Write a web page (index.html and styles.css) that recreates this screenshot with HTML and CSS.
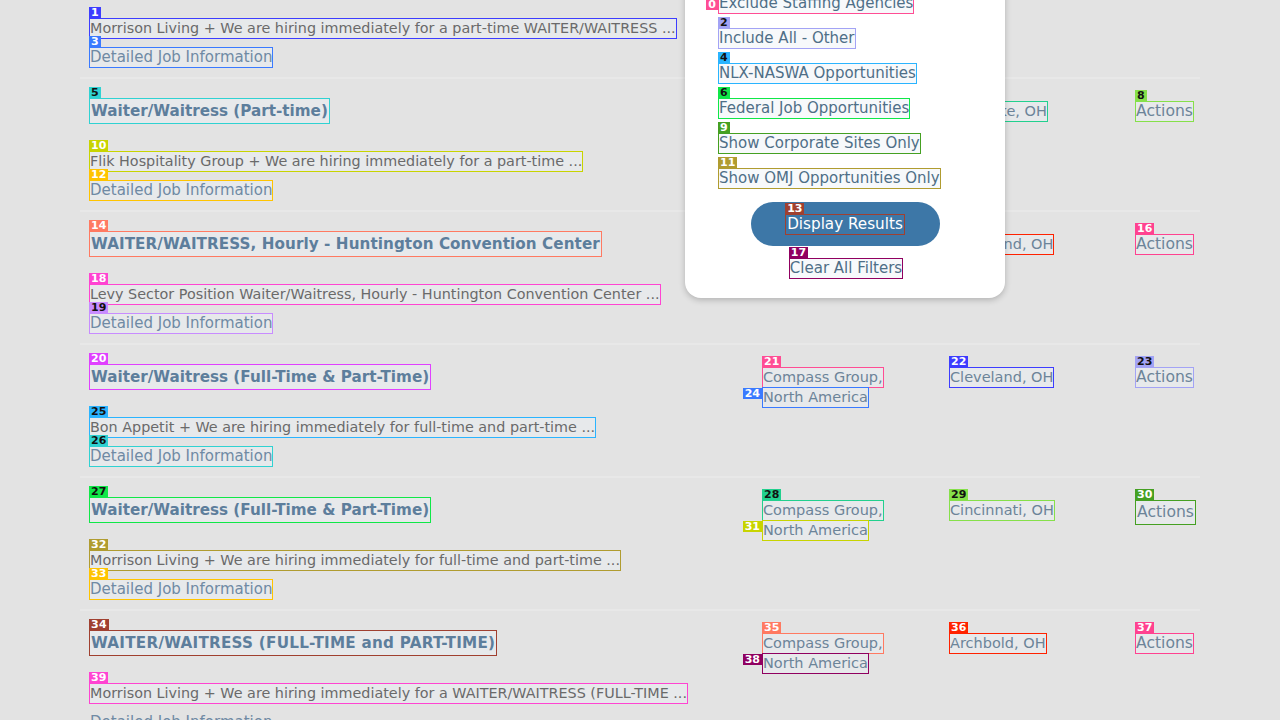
FILE: index.html
```html
<!DOCTYPE html>
<html lang="en">
<head>
<meta charset="utf-8">
<title>Job results</title>
<link rel="stylesheet" href="styles.css">
</head>
<body>
<div class="page">
  <div class="results">
    <div class="row">
      <div class="main">
        <div class="title"><span>Waiter/Waitress (Part-time)</span></div>
        <div class="desc"><span class="hl k1">Morrison Living + We are hiring immediately for a part-time WAITER/WAITRESS ...<b class="tag">1</b></span></div>
        <div class="link"><span class="hl k3">Detailed Job Information<b class="tag">3</b></span></div>
      </div>
      <div class="cell company"><span>Compass Group,</span><span>North America</span></div>
      <div class="cell"><span>Cleveland, OH</span></div>
      <div class="cell"><span class="actions">Actions</span></div>
    </div>

    <div class="row">
      <div class="main">
        <div class="title"><span class="hl k5">Waiter/Waitress (Part-time)<b class="tag dk">5</b></span></div>
        <div class="desc"><span class="hl k10">Flik Hospitality Group + We are hiring immediately for a part-time ...<b class="tag">10</b></span></div>
        <div class="link"><span class="hl k12">Detailed Job Information<b class="tag">12</b></span></div>
      </div>
      <div class="cell company"><span>Compass Group,</span><span>North America</span></div>
      <div class="cell"><span class="hl k7">Westlake, OH<b class="tag dk">7</b></span></div>
      <div class="cell"><span class="hl k8 actions">Actions<b class="tag dk">8</b></span></div>
    </div>

    <div class="row">
      <div class="main">
        <div class="title"><span class="hl k14 wide1">WAITER/WAITRESS, Hourly - Huntington Convention Center<b class="tag">14</b></span></div>
        <div class="desc"><span class="hl k18">Levy Sector Position Waiter/Waitress, Hourly - Huntington Convention Center ...<b class="tag">18</b></span></div>
        <div class="link"><span class="hl k19">Detailed Job Information<b class="tag dk">19</b></span></div>
      </div>
      <div class="cell company"><span>Levy Restaurants</span></div>
      <div class="cell"><span class="hl k15">Cleveland, OH<b class="tag">15</b></span></div>
      <div class="cell"><span class="hl k16 actions">Actions<b class="tag">16</b></span></div>
    </div>

    <div class="row">
      <div class="main">
        <div class="title"><span class="hl k20">Waiter/Waitress (Full-Time &amp; Part-Time)<b class="tag">20</b></span></div>
        <div class="desc"><span class="hl k4">Bon Appetit + We are hiring immediately for full-time and part-time ...<b class="tag dk">25</b></span></div>
        <div class="link"><span class="hl k5">Detailed Job Information<b class="tag dk">26</b></span></div>
      </div>
      <div class="cell company"><span class="hl k0">Compass Group,<b class="tag">21</b></span><span class="hl k3">North America<b class="tag side">24</b></span></div>
      <div class="cell"><span class="hl k1">Cleveland, OH<b class="tag">22</b></span></div>
      <div class="cell"><span class="hl k2 actions">Actions<b class="tag dk">23</b></span></div>
    </div>

    <div class="row">
      <div class="main">
        <div class="title"><span class="hl k6">Waiter/Waitress (Full-Time &amp; Part-Time)<b class="tag dk">27</b></span></div>
        <div class="desc"><span class="hl k11">Morrison Living + We are hiring immediately for full-time and part-time ...<b class="tag">32</b></span></div>
        <div class="link"><span class="hl k12">Detailed Job Information<b class="tag">33</b></span></div>
      </div>
      <div class="cell company"><span class="hl k7">Compass Group,<b class="tag dk">28</b></span><span class="hl k10">North America<b class="tag side">31</b></span></div>
      <div class="cell"><span class="hl k8">Cincinnati, OH<b class="tag dk">29</b></span></div>
      <div class="cell"><span class="hl k9 actions act">Actions<b class="tag">30</b></span></div>
    </div>

    <div class="row">
      <div class="main">
        <div class="title"><span class="hl k13 wide2">WAITER/WAITRESS (FULL-TIME and PART-TIME)<b class="tag">34</b></span></div>
        <div class="desc"><span class="hl k18">Morrison Living + We are hiring immediately for a WAITER/WAITRESS (FULL-TIME ...<b class="tag">39</b></span></div>
        <div class="link"><span>Detailed Job Information</span></div>
      </div>
      <div class="cell company"><span class="hl k14">Compass Group,<b class="tag">35</b></span><span class="hl k17">North America<b class="tag side">38</b></span></div>
      <div class="cell"><span class="hl k15">Archbold, OH<b class="tag">36</b></span></div>
      <div class="cell"><span class="hl k16 actions">Actions<b class="tag">37</b></span></div>
    </div>
  </div>

  <div class="panel">
    <div class="options">
      <label class="opt"><span class="hl k0">Exclude Staffing Agencies<b class="tag side top0">0</b></span></label>
      <label class="opt"><span class="hl k2">Include All - Other<b class="tag dk">2</b></span></label>
      <label class="opt"><span class="hl k4">NLX-NASWA Opportunities<b class="tag dk">4</b></span></label>
      <label class="opt"><span class="hl k6">Federal Job Opportunities<b class="tag dk">6</b></span></label>
      <label class="opt"><span class="hl k9">Show Corporate Sites Only<b class="tag">9</b></span></label>
      <label class="opt"><span class="hl k11">Show OMJ Opportunities Only<b class="tag">11</b></span></label>
    </div>
    <button class="display"><span class="hl k13">Display Results<b class="tag">13</b></span></button>
    <a class="clear"><span class="hl k17">Clear All Filters<b class="tag">17</b></span></a>
  </div>
</div>
</body>
</html>
```

FILE: styles.css
```css
* { box-sizing: border-box; }
html, body { margin: 0; padding: 0; }
body {
  background: #e3e3e3;
  font-family: "DejaVu Sans", "Noto Sans", sans-serif;
  width: 1280px;
  height: 720px;
  overflow: hidden;
}
.page { position: relative; width: 1280px; height: 720px; overflow: hidden; }

.results {
  margin: -54px 0 0 80px;
  width: 1120px;
}
.row {
  height: 133px;
  display: grid;
  grid-template-columns: 673px 187px 186px 1fr;
  padding-left: 10px;
  border-bottom: 2px solid #e8e8e8;
}
.main { display: flex; flex-direction: column; align-items: flex-start; padding-top: 20px; }
.title { font-weight: bold; font-size: 15.2px; line-height: 24px; color: #5d7e9c; height: 24px; white-space: nowrap; }
.title .hl { padding: 0 1px; }
.wide1 { letter-spacing: 0.07px; }
.wide2 { letter-spacing: 0.25px; }
.desc { margin-top: 29px; font-size: 14.35px; line-height: 19px; color: #6a6a6a; height: 19px; white-space: nowrap; }
.link { margin-top: 10px; font-size: 15px; line-height: 19px; color: #6f8aa4; white-space: nowrap; }

.cell {
  padding-top: 23px;
  font-size: 14.5px;
  line-height: 19px;
  color: #6c8499;
  display: flex;
  flex-direction: column;
  align-items: flex-start;
  white-space: nowrap;
}
.company { gap: 1px; }
.actions { font-size: 15.6px; }

.hl {
  position: relative;
  display: inline-block;
  outline: 1px solid var(--c);
  background: rgba(236, 240, 244, 0.45);
}
.act { padding: 2px 1px; }
.tag {
  position: absolute;
  left: -1px;
  bottom: 100%;
  background: var(--c);
  color: #fff;
  font: bold 11px/11px "DejaVu Sans", sans-serif;
  padding: 0 2px;
  margin-bottom: 1px;
  white-space: nowrap;
}
.tag.dk { color: #111; }
.tag.side { left: auto; right: 100%; bottom: auto; top: 0; margin: 0 1px 0 0; }
.tag.top0 { top: 5px; }

.k0 { --c: #ff4d94; }
.k1 { --c: #3d3dff; }
.k2 { --c: #a3a3f5; }
.k3 { --c: #3a7aff; }
.k4 { --c: #2ab4ff; }
.k5 { --c: #30d2d2; }
.k6 { --c: #10e848; }
.k7 { --c: #22d08e; }
.k8 { --c: #86e04a; }
.k9 { --c: #45a022; }
.k10 { --c: #c8d400; }
.k11 { --c: #b09c30; }
.k12 { --c: #ffc400; }
.k13 { --c: #a04030; }
.k14 { --c: #ff7a62; }
.k15 { --c: #ff2200; }
.k16 { --c: #ff4290; }
.k17 { --c: #900060; }
.k18 { --c: #ff44d2; }
.k19 { --c: #c88cff; }
.k20 { --c: #e040ff; }

.panel {
  position: absolute;
  left: 685px;
  top: -30px;
  width: 320px;
  background: #fff;
  border-radius: 0 0 16px 16px;
  box-shadow: 0 2px 6px rgba(0, 0, 0, 0.22);
  padding: 24px 0 20px;
  display: flex;
  flex-direction: column;
  align-items: center;
}
.options {
  align-self: stretch;
  padding-left: 34px;
  display: flex;
  flex-direction: column;
  gap: 16px;
}
.opt { font-size: 15px; line-height: 19px; height: 19px; color: #4f6f87; white-space: nowrap; }
.opt .hl { background: #f7f9fb; }
.display {
  margin-top: 14px;
  width: 189px;
  height: 44px;
  border: 0;
  border-radius: 22px;
  background: #3d77a7;
  color: #fff;
  font-family: "DejaVu Sans", sans-serif;
  font-size: 15.2px;
  line-height: 19px;
  padding: 0;
}
.display .hl { background: transparent; padding: 0 1px; }
.clear {
  margin-top: 13px;
  margin-left: 2px;
  font-size: 15px;
  line-height: 19px;
  color: #4f6f87;
  white-space: nowrap;
}
.clear .hl { background: #f7f9fb; }
```
